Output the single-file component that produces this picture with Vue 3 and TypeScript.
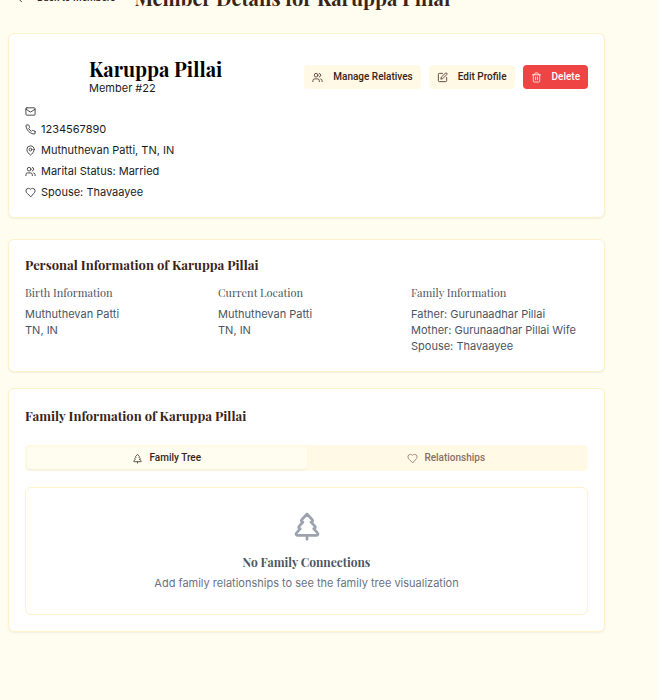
<script setup lang="ts">
import { ref } from 'vue'

type Shape = string[]

const icons: Record<string, Shape> = {
  arrow: ['m12 19-7-7 7-7', 'M19 12H5'],
  mail: ['M4 4h16a2 2 0 0 1 2 2v12a2 2 0 0 1-2 2H4a2 2 0 0 1-2-2V6a2 2 0 0 1 2-2z', 'm22 7-8.97 5.7a1.94 1.94 0 0 1-2.06 0L2 7'],
  phone: ['M22 16.92v3a2 2 0 0 1-2.18 2 19.79 19.79 0 0 1-8.63-3.07 19.5 19.5 0 0 1-6-6 19.79 19.79 0 0 1-3.07-8.67A2 2 0 0 1 4.11 2h3a2 2 0 0 1 2 1.72 12.84 12.84 0 0 0 .7 2.81 2 2 0 0 1-.45 2.11L8.09 9.91a16 16 0 0 0 6 6l1.27-1.27a2 2 0 0 1 2.11-.45 12.84 12.84 0 0 0 2.81.7A2 2 0 0 1 22 16.92z'],
  pin: ['M20 10c0 5-5.5 10.2-7.4 11.8a1 1 0 0 1-1.2 0C9.5 20.2 4 15 4 10a8 8 0 0 1 16 0z', 'M15 10a3 3 0 1 1-6 0 3 3 0 0 1 6 0z'],
  users: ['M16 21v-2a4 4 0 0 0-4-4H6a4 4 0 0 0-4 4v2', 'M13 7a4 4 0 1 1-8 0 4 4 0 0 1 8 0z', 'M22 21v-2a4 4 0 0 0-3-3.87', 'M16 3.13a4 4 0 0 1 0 7.75'],
  heart: ['M19 14c1.49-1.46 3-3.21 3-5.5A5.5 5.5 0 0 0 16.5 3c-1.76 0-3 .5-4.5 2-1.5-1.5-2.74-2-4.5-2A5.5 5.5 0 0 0 2 8.5c0 2.3 1.5 4.05 3 5.5l7 7z'],
  edit: ['M12 3H5a2 2 0 0 0-2 2v14a2 2 0 0 0 2 2h14a2 2 0 0 0 2-2v-7', 'M18.4 2.6a1 1 0 0 1 3 3l-9 9-4 1 1-4z'],
  trash: ['M3 6h18', 'M19 6v14a2 2 0 0 1-2 2H7a2 2 0 0 1-2-2V6', 'M8 6V4a2 2 0 0 1 2-2h4a2 2 0 0 1 2 2v2', 'M10 11v6', 'M14 11v6'],
  tree: ['m17 14 3 3.3a1 1 0 0 1-.7 1.7H4.7a1 1 0 0 1-.7-1.7L7 14h-.3a1 1 0 0 1-.7-1.7L9 9h-.2A1 1 0 0 1 8 7.3L12 3l4 4.3a1 1 0 0 1-.8 1.7H15l3 3.3a1 1 0 0 1-.7 1.7H17Z', 'M12 22v-3'],
}

const name = 'Karuppa Pillai'
const contacts = [
  { icon: 'mail', text: '' },
  { icon: 'phone', text: '1234567890' },
  { icon: 'pin', text: 'Muthuthevan Patti, TN, IN' },
  { icon: 'users', text: 'Marital Status: Married' },
  { icon: 'heart', text: 'Spouse: Thavaayee' },
]
const actions = [
  { icon: 'users', text: 'Manage Relatives', danger: false },
  { icon: 'edit', text: 'Edit Profile', danger: false },
  { icon: 'trash', text: 'Delete', danger: true },
]
const facts = [
  { title: 'Birth Information', lines: ['Muthuthevan Patti', 'TN, IN'] },
  { title: 'Current Location', lines: ['Muthuthevan Patti', 'TN, IN'] },
  {
    title: 'Family Information',
    lines: ['Father: Gurunaadhar Pillai', 'Mother: Gurunaadhar Pillai Wife', 'Spouse: Thavaayee'],
  },
]
const tabs = [
  { icon: 'tree', text: 'Family Tree' },
  { icon: 'heart', text: 'Relationships' },
]
const active = ref(0)
</script>

<template>
  <main class="page">
    <header class="top">
      <a href="#" class="back">
        <svg class="icon" viewBox="0 0 24 24"><path v-for="d in icons.arrow" :key="d" :d="d" /></svg>
        Back to Members
      </a>
      <h1>Member Details for {{ name }}</h1>
    </header>

    <section class="card profile">
      <div class="profile-row">
        <div class="avatar"></div>
        <div class="identity">
          <h2>{{ name }}</h2>
          <p>Member #22</p>
        </div>
        <div class="actions">
          <button v-for="a in actions" :key="a.text" type="button" class="btn" :class="{ danger: a.danger }">
            <svg class="icon" viewBox="0 0 24 24"><path v-for="d in icons[a.icon]" :key="d" :d="d" /></svg>
            {{ a.text }}
          </button>
        </div>
      </div>
      <ul class="contacts">
        <li v-for="c in contacts" :key="c.icon">
          <svg class="icon" viewBox="0 0 24 24"><path v-for="d in icons[c.icon]" :key="d" :d="d" /></svg>
          <span v-if="c.text">{{ c.text }}</span>
        </li>
      </ul>
    </section>

    <section class="card personal">
      <h3>Personal Information of {{ name }}</h3>
      <div class="facts">
        <div v-for="f in facts" :key="f.title">
          <h4>{{ f.title }}</h4>
          <p v-for="l in f.lines" :key="l">{{ l }}</p>
        </div>
      </div>
    </section>

    <section class="card family">
      <h3>Family Information of {{ name }}</h3>
      <div class="tabs" role="tablist">
        <button
          v-for="(t, i) in tabs"
          :key="t.text"
          type="button"
          role="tab"
          class="tab"
          :class="{ active: active === i }"
          :aria-selected="active === i"
          @click="active = i"
        >
          <svg class="icon" viewBox="0 0 24 24"><path v-for="d in icons[t.icon]" :key="d" :d="d" /></svg>
          {{ t.text }}
        </button>
      </div>
      <div class="empty">
        <svg class="icon large" viewBox="0 0 24 24"><path v-for="d in icons.tree" :key="d" :d="d" /></svg>
        <h4>No Family Connections</h4>
        <p>Add family relationships to see the family tree visualization</p>
      </div>
    </section>
  </main>
</template>

<style>
body {
  margin: 0;
  background: #fffdf0;
}
</style>

<style scoped>
.page {
  padding: 0 53px 24px 8px;
  font-family: Inter, "Liberation Sans", sans-serif;
  font-size: 11px;
  line-height: 16px;
  color: #1c1c1c;
}
h1,
h2,
h3,
h4,
p,
ul {
  margin: 0;
  padding: 0;
}
h1,
h2,
h3,
h4 {
  font-family: "Playfair Display", "Liberation Serif", serif;
}
.icon {
  width: 11px;
  height: 11px;
  flex: none;
  fill: none;
  stroke: currentColor;
  stroke-width: 2;
  stroke-linecap: round;
  stroke-linejoin: round;
}
.top {
  display: flex;
  align-items: center;
  gap: 19px;
  height: 28px;
  margin-top: -16px;
  margin-bottom: 21px;
  padding-left: 8px;
  color: #3a2418;
}
.back {
  display: flex;
  align-items: center;
  gap: 10px;
  color: inherit;
  text-decoration: none;
  font: 500 10px/16px Roboto, Inter, sans-serif;
}
h1 {
  font-size: 20px;
  line-height: 28px;
}
.card {
  box-sizing: border-box;
  border: 1px solid #fff1c9;
  border-radius: 6px;
  background: #fff;
  box-shadow: 0 1px 2px rgba(0, 0, 0, 0.06);
  padding: 16px;
}
.profile {
  padding-top: 19px;
  padding-bottom: 17px;
  margin-bottom: 21px;
}
.profile-row {
  display: flex;
  align-items: center;
}
.avatar {
  width: 48px;
  height: 48px;
  margin-right: 16px;
}
.identity {
  flex: 1;
  padding-bottom: 2px;
}
h2 {
  font-size: 20px;
  line-height: 24px;
  color: #000;
}
.identity p {
  line-height: 14px;
}
.actions {
  display: flex;
  gap: 8px;
}
.btn {
  display: flex;
  align-items: center;
  gap: 10px;
  height: 24px;
  padding: 0 8px;
  border: 0;
  border-radius: 4px;
  background: #fff9e5;
  color: #3a2418;
  font: 500 10px/16px Roboto, Inter, sans-serif;
}
.danger {
  background: #ef4444;
  color: #fff;
}
.contacts {
  display: flex;
  flex-direction: column;
  gap: 5px;
  padding-top: 5px;
  list-style: none;
}
.contacts li {
  display: flex;
  align-items: center;
  gap: 5px;
}
.contacts li:first-child {
  height: 10px;
}
.contacts .icon,
.btn .icon,
.tab .icon {
  opacity: 0.85;
}
.personal {
  padding-top: 15px;
  padding-bottom: 17px;
  margin-bottom: 16px;
}
.family {
  padding-top: 17px;
}
h3 {
  font-size: 13px;
  line-height: 20px;
  color: #3a2418;
}
.facts {
  display: grid;
  grid-template-columns: repeat(3, 1fr);
  gap: 16px;
  margin-top: 10px;
  color: #4b5563;
}
.facts h4 {
  margin-bottom: 5px;
  font-size: 11px;
  font-weight: 400;
  line-height: 16px;
}
.tabs {
  display: grid;
  grid-template-columns: 1fr 1fr;
  margin: 19px 0 16px;
  padding: 2px;
  border-radius: 4px;
  background: #fff9e5;
}
.tab {
  display: flex;
  align-items: center;
  justify-content: center;
  gap: 6px;
  height: 22px;
  padding: 0;
  border: 0;
  border-radius: 3px;
  background: transparent;
  color: #897064;
  font: 500 10px/16px Roboto, Inter, sans-serif;
}
.tab.active {
  background: #fffdf0;
  color: #3a2418;
  box-shadow: 0 1px 2px rgba(0, 0, 0, 0.06);
}
.empty {
  display: flex;
  flex-direction: column;
  align-items: center;
  padding: 22px 16px 23px;
  border: 1px solid #fff1c9;
  border-radius: 6px;
  text-align: center;
  color: #6b7280;
}
.large {
  width: 32px;
  height: 32px;
  color: #9ca3af;
}
.empty h4 {
  margin: 12px 0 5px;
  font-size: 12px;
  line-height: 16px;
  color: #4b5563;
}
</style>
